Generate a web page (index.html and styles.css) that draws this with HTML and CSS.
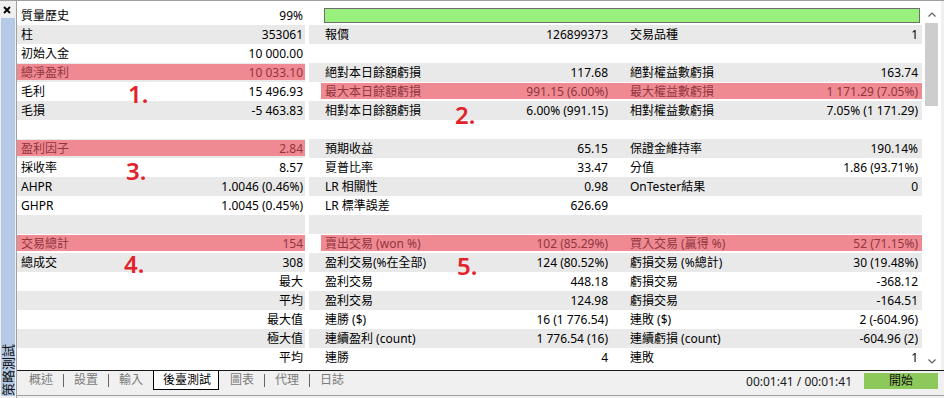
FILE: index.html
```html
<!DOCTYPE html>
<html lang="zh-Hant">
<head>
    <meta charset="UTF-8">
    <title>策略測試</title>
    <link rel="stylesheet" href="styles.css">
</head>
<body>
<div class="app">
    <div class="sidebar">
        <div class="close">
            <svg width="8" height="8" viewBox="0 0 8 8"><path d="M1 1L7 7M7 1L1 7" stroke="#000" stroke-width="1.8"/></svg>
        </div>
        <div class="side-strip"><span class="side-title">策略測試</span></div>
    </div>

    <div class="main">
        <div class="content">
            <div class="report">
                <div class="row">
                    <div class="cell c1"><span>質量歷史</span><span>99%</span></div>
                    <div class="cell cwide"><div class="quality-bar"></div></div>
                </div>
                <div class="row">
                    <div class="cell c1"><span>柱</span><span>353061</span></div>
                    <div class="cell c2"><span>報價</span><span>126899373</span></div>
                    <div class="cell c3"><span>交易品種</span><span>1</span></div>
                </div>
                <div class="row">
                    <div class="cell c1"><span>初始入金</span><span>10 000.00</span></div>
                    <div class="cell c2"></div>
                    <div class="cell c3"></div>
                </div>
                <div class="row">
                    <div class="cell c1 hl"><span>總淨盈利</span><span>10 033.10</span></div>
                    <div class="cell c2"><span>絕對本日餘額虧損</span><span>117.68</span></div>
                    <div class="cell c3"><span>絕對權益數虧損</span><span>163.74</span></div>
                </div>
                <div class="row">
                    <div class="cell c1"><span>毛利</span><span>15 496.93</span></div>
                    <div class="cell c2 hl"><span>最大本日餘額虧損</span><span>991.15 (6.00%)</span></div>
                    <div class="cell c3 hl"><span>最大權益數虧損</span><span>1 171.29 (7.05%)</span></div>
                </div>
                <div class="row">
                    <div class="cell c1"><span>毛損</span><span>-5 463.83</span></div>
                    <div class="cell c2"><span>相對本日餘額虧損</span><span>6.00% (991.15)</span></div>
                    <div class="cell c3"><span>相對權益數虧損</span><span>7.05% (1 171.29)</span></div>
                </div>
                <div class="row">
                    <div class="cell c1"></div>
                    <div class="cell c2"></div>
                    <div class="cell c3"></div>
                </div>
                <div class="row">
                    <div class="cell c1 hl"><span>盈利因子</span><span>2.84</span></div>
                    <div class="cell c2"><span>預期收益</span><span>65.15</span></div>
                    <div class="cell c3"><span>保證金維持率</span><span>190.14%</span></div>
                </div>
                <div class="row">
                    <div class="cell c1"><span>採收率</span><span>8.57</span></div>
                    <div class="cell c2"><span>夏普比率</span><span>33.47</span></div>
                    <div class="cell c3"><span>分值</span><span>1.86 (93.71%)</span></div>
                </div>
                <div class="row">
                    <div class="cell c1"><span>AHPR</span><span>1.0046 (0.46%)</span></div>
                    <div class="cell c2"><span>LR 相關性</span><span>0.98</span></div>
                    <div class="cell c3"><span>OnTester結果</span><span>0</span></div>
                </div>
                <div class="row">
                    <div class="cell c1"><span>GHPR</span><span>1.0045 (0.45%)</span></div>
                    <div class="cell c2"><span>LR 標準誤差</span><span>626.69</span></div>
                    <div class="cell c3"></div>
                </div>
                <div class="row">
                    <div class="cell c1"></div>
                    <div class="cell c2"></div>
                    <div class="cell c3"></div>
                </div>
                <div class="row">
                    <div class="cell c1 hl"><span>交易總計</span><span>154</span></div>
                    <div class="cell c2 hl"><span>賣出交易 (won %)</span><span>102 (85.29%)</span></div>
                    <div class="cell c3 hl"><span>買入交易 (贏得 %)</span><span>52 (71.15%)</span></div>
                </div>
                <div class="row">
                    <div class="cell c1"><span>總成交</span><span>308</span></div>
                    <div class="cell c2"><span>盈利交易(%在全部)</span><span>124 (80.52%)</span></div>
                    <div class="cell c3"><span>虧損交易 (%總計)</span><span>30 (19.48%)</span></div>
                </div>
                <div class="row">
                    <div class="cell c1"><span></span><span>最大</span></div>
                    <div class="cell c2"><span>盈利交易</span><span>448.18</span></div>
                    <div class="cell c3"><span>虧損交易</span><span>-368.12</span></div>
                </div>
                <div class="row">
                    <div class="cell c1"><span></span><span>平均</span></div>
                    <div class="cell c2"><span>盈利交易</span><span>124.98</span></div>
                    <div class="cell c3"><span>虧損交易</span><span>-164.51</span></div>
                </div>
                <div class="row">
                    <div class="cell c1"><span></span><span>最大值</span></div>
                    <div class="cell c2"><span>連勝 ($)</span><span>16 (1 776.54)</span></div>
                    <div class="cell c3"><span>連敗 ($)</span><span>2 (-604.96)</span></div>
                </div>
                <div class="row">
                    <div class="cell c1"><span></span><span>極大值</span></div>
                    <div class="cell c2"><span>連續盈利 (count)</span><span>1 776.54 (16)</span></div>
                    <div class="cell c3"><span>連續虧損 (count)</span><span>-604.96 (2)</span></div>
                </div>
                <div class="row">
                    <div class="cell c1"><span></span><span>平均</span></div>
                    <div class="cell c2"><span>連勝</span><span>4</span></div>
                    <div class="cell c3"><span>連敗</span><span>1</span></div>
                </div>
            </div>

            <div class="scrollbar">
                <div class="arrow">
                    <svg width="8" height="5" viewBox="0 0 8 5"><path d="M0.5 4.5L4 1L7.5 4.5" fill="none" stroke="#606060" stroke-width="1.2"/></svg>
                </div>
                <div class="track"><div class="thumb"></div></div>
                <div class="arrow">
                    <svg width="8" height="5" viewBox="0 0 8 5"><path d="M0.5 0.5L4 4L7.5 0.5" fill="none" stroke="#606060" stroke-width="1.2"/></svg>
                </div>
            </div>
        </div>

        <div class="bottombar">
            <div class="tabs">
                <span class="tab">概述</span>
                <span class="sep"></span>
                <span class="tab">設置</span>
                <span class="sep"></span>
                <span class="tab">輸入</span>
                <span class="tab active">後臺測試</span>
                <span class="tab after-active">圖表</span>
                <span class="sep"></span>
                <span class="tab">代理</span>
                <span class="sep"></span>
                <span class="tab">日誌</span>
            </div>
            <div class="status">
                <span class="time">00:01:41 / 00:01:41</span>
                <button class="start">開始</button>
            </div>
        </div>
    </div>

    <!-- 標註數字 -->
    <span class="mark" style="left:128px; top:81px">1.</span>
    <span class="mark" style="left:455px; top:102px">2.</span>
    <span class="mark" style="left:126px; top:158px">3.</span>
    <span class="mark" style="left:124px; top:251px">4.</span>
    <span class="mark" style="left:457px; top:253px">5.</span>
</div>
</body>
</html>
```

FILE: styles.css
```css
* {
    box-sizing: border-box;
}
body {
    margin: 0;
    font-family: "Noto Sans", "Noto Sans CJK TC", sans-serif;
    font-size: 12px;
    color: #000;
    background: #f0f0f0;
}
.app {
    position: relative;
    display: flex;
    width: 944px;
    height: 398px;
    border-top: 1px solid #a0a0a0;
    overflow: hidden;
}

/* 左側欄 */
.sidebar {
    width: 17px;
    display: flex;
    flex-direction: column;
    padding: 0 1px 2px 1px;
    border-right: 1px solid #a0a0a0;
    background: #f0f0f0;
}
.close {
    height: 17px;
    padding: 5px 0 0 2px;
}
.close svg {
    display: block;
}
.side-strip {
    flex: 1;
    background: #b4cae6;
    display: flex;
    flex-direction: column;
    justify-content: flex-end;
    align-items: center;
}
.side-title {
    writing-mode: vertical-rl;
    text-orientation: sideways;
    transform: rotate(180deg);
    font-size: 13px;
    line-height: 14px;
    color: #111;
}

/* 主區 */
.main {
    flex: 1;
    display: flex;
    flex-direction: column;
}
.content {
    height: 369px;
    display: flex;
    background: #fff;
    padding-top: 5px;
    border-right: 3px solid #f0f0f0;
}
.report {
    width: 905px;
}
.row {
    display: flex;
    height: 19px;
    line-height: 19px;
}
.cell {
    display: flex;
    justify-content: space-between;
    white-space: nowrap;
    background-repeat: no-repeat;
}
.row:nth-child(even) .cell {
    background-color: #e9e9e9;
}
.c1 {
    width: 288px;
    padding: 0 2px 0 4px;
}
.c2 {
    width: 311px;
    margin-left: 4px;
    padding: 0 12px 0 16px;
}
.c3 {
    width: 302px;
    padding: 0 4px 0 10px;
}
.cwide {
    width: 613px;
    margin-left: 4px;
    padding: 2px 2px 0 15px;
}
.quality-bar {
    width: 100%;
    height: 15px;
    background: #9af07c;
    border: 1px solid #6e6e6e;
}
.cell.hl {
    color: #93353d;
    background-image: linear-gradient(#ef8a93, #ef8a93);
    background-position: 0 1px;
    background-size: 100% 16px;
}
.c2.hl {
    background-position: 12px 1px;
    background-size: calc(100% - 12px) 16px;
}

/* 捲軸 */
.scrollbar {
    width: 19px;
    height: 364px;
    display: flex;
    flex-direction: column;
    background: #fff;
}
.arrow {
    height: 17px;
    display: flex;
    align-items: center;
    justify-content: center;
}
.track {
    flex: 1;
    padding: 0 3px 0 3px;
}
.thumb {
    height: 83px;
    background: #cdcdcd;
}

/* 底部頁籤 */
.bottombar {
    display: flex;
    height: 28px;
    border-top: 1px solid #1a1a1a;
    border-bottom: 1px solid #a0a0a0;
    margin-bottom: 2px;
    background: #f0f0f0;
}
.tabs {
    display: flex;
    align-items: flex-start;
    padding-left: 2px;
}
.tab {
    padding: 0 10px;
    height: 19px;
    line-height: 18px;
    color: #7a7a7a;
}
.sep {
    width: 1px;
    height: 13px;
    margin-top: 3px;
    background: #666;
}
.tab.active {
    background: #fff;
    color: #000;
    border: 1px solid #000;
    border-top: none;
    padding: 0 7px 0 9px;
}
.tab.after-active {
    padding-left: 11px;
}
.status {
    margin-left: auto;
    display: flex;
    align-items: flex-start;
    padding-right: 6px;
}
.time {
    line-height: 21px;
    color: #1a1a1a;
    margin-right: 12px;
}
.start {
    width: 74px;
    height: 16px;
    margin-top: 2px;
    padding: 0;
    border: none;
    background: #8dc85b;
    font-family: inherit;
    font-size: 12px;
    line-height: 16px;
    color: #111;
}

/* 紅色標註 */
.mark {
    position: absolute;
    font-family: "Noto Sans", sans-serif;
    font-weight: 600;
    font-size: 24px;
    line-height: 24px;
    color: #e2232b;
}
```
